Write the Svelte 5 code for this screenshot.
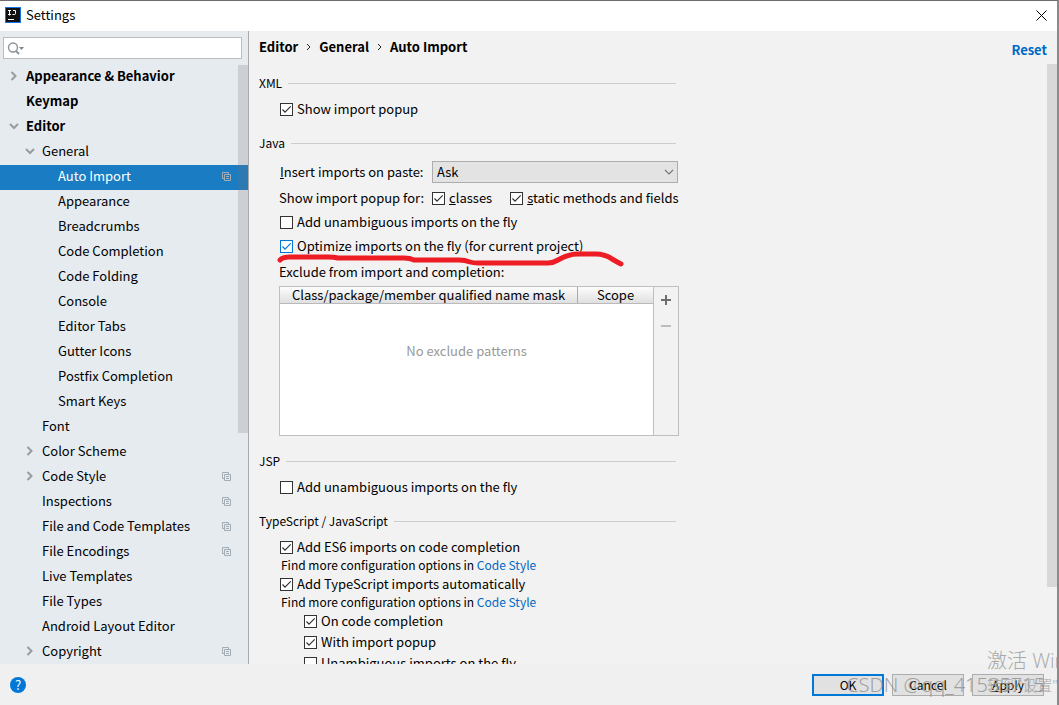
<script lang="ts">
	interface TreeItem {
		label: string;
		level: number;
		arrow?: 'open' | 'closed';
		bold?: boolean;
		project?: boolean;
	}

	const items: TreeItem[] = [
		{ label: 'Appearance & Behavior', level: 0, arrow: 'closed', bold: true },
		{ label: 'Keymap', level: 0, bold: true },
		{ label: 'Editor', level: 0, arrow: 'open', bold: true },
		{ label: 'General', level: 1, arrow: 'open' },
		{ label: 'Auto Import', level: 2, project: true },
		{ label: 'Appearance', level: 2 },
		{ label: 'Breadcrumbs', level: 2 },
		{ label: 'Code Completion', level: 2 },
		{ label: 'Code Folding', level: 2 },
		{ label: 'Console', level: 2 },
		{ label: 'Editor Tabs', level: 2 },
		{ label: 'Gutter Icons', level: 2 },
		{ label: 'Postfix Completion', level: 2 },
		{ label: 'Smart Keys', level: 2 },
		{ label: 'Font', level: 1 },
		{ label: 'Color Scheme', level: 1, arrow: 'closed' },
		{ label: 'Code Style', level: 1, arrow: 'closed', project: true },
		{ label: 'Inspections', level: 1, project: true },
		{ label: 'File and Code Templates', level: 1, project: true },
		{ label: 'File Encodings', level: 1, project: true },
		{ label: 'Live Templates', level: 1 },
		{ label: 'File Types', level: 1 },
		{ label: 'Android Layout Editor', level: 1 },
		{ label: 'Copyright', level: 1, arrow: 'closed', project: true }
	];

	let selected = $state('Auto Import');
	let query = $state('');
	let paste = $state('Ask');
</script>

{#snippet check(label: string, checked: boolean, mnemonic = false, active = false)}
	<label class="check" class:check--active={active}>
		<span class="check__box">
			<input type="checkbox" {checked} />
			<svg viewBox="0 0 13 13"><path d="M2.5 6.5 5 9.2 10.7 3.4" /></svg>
		</span>
		<span>{#if mnemonic}<u>{label[0]}</u>{label.slice(1)}{:else}{label}{/if}</span>
	</label>
{/snippet}

{#snippet heading(text: string)}
	<h2 class="group__title">{text}</h2>
{/snippet}

<div class="window">
	<header class="titlebar">
		<svg class="titlebar__logo" viewBox="0 0 16 16">
			<rect width="16" height="16" fill="#1673e6" />
			<rect x="1" y="1" width="14" height="14" fill="#111" />
			<path d="M3 3.5h3M4.5 3.5v5M3 7.5h3M8 3.5h2.5v3q0 1-1 1H7.5M3 12.5h6" fill="none" stroke="#fff" />
		</svg>
		<h1 class="titlebar__title">Settings</h1>
		<button class="titlebar__close" aria-label="Close">
			<svg viewBox="0 0 11 11"><path d="M.5.5l10 10M10.5.5l-10 10" stroke="#000" /></svg>
		</button>
	</header>

	<div class="content">
		<aside class="sidebar">
			<div class="search">
				<svg class="search__icon" viewBox="0 0 17 13">
					<circle cx="6" cy="5.5" r="4.5" fill="none" stroke="#88939b" stroke-width="1.4" />
					<path d="M9 9l3 3" stroke="#88939b" stroke-width="1.8" />
					<path d="M12 5h5l-2.5 3z" fill="#7b858c" />
				</svg>
				<input type="text" aria-label="Search settings" bind:value={query} />
			</div>
			<nav class="tree">
				{#each items as item (item.label)}
					<button
						class="tree__row tree__row--level{item.level}"
						class:tree__row--bold={item.bold}
						class:tree__row--selected={selected === item.label}
						onclick={() => (selected = item.label)}
					>
						<span class="tree__arrow">
							{#if item.arrow === 'closed'}
								<svg viewBox="0 0 10 10"><path d="M2.5 1 6.5 5 2.5 9" /></svg>
							{:else if item.arrow === 'open'}
								<svg viewBox="0 0 10 10"><path d="M1 3 5 7 9 3" /></svg>
							{/if}
						</span>
						<span class="tree__label">{item.label}</span>
						{#if item.project}
							<svg class="tree__project" viewBox="0 0 9 9">
								<path d="M2.5 6.5h-2v-6h6v2M2.5 2.5h6v6h-6zM4 4.5h3M4 6.5h3" />
							</svg>
						{/if}
					</button>
				{/each}
				<div class="tree__scroll"></div>
			</nav>
		</aside>

		<main class="panel">
			<div class="panel__top">
				<div class="crumbs">
					<span>Editor</span>
					<svg viewBox="0 0 5 8"><path d="M1 1 4 4 1 7" /></svg>
					<span>General</span>
					<svg viewBox="0 0 5 8"><path d="M1 1 4 4 1 7" /></svg>
					<span>Auto Import</span>
				</div>
				<a class="panel__reset" href="#reset">Reset</a>
			</div>

			<div class="panel__body">
				<section class="group">
					{@render heading('XML')}
					<div class="group__body">
						{@render check('Show import popup', true)}
					</div>
				</section>

				<section class="group">
					{@render heading('Java')}
					<div class="group__body group__body--java">
						<div class="paste">
							<label for="paste"><u>I</u>nsert imports on paste:</label>
							<div class="paste__select">
								<select id="paste" bind:value={paste}>
									<option>Ask</option>
									<option>All</option>
									<option>None</option>
								</select>
								<svg viewBox="0 0 10 6"><path d="M1 1 5 5 9 1" /></svg>
							</div>
						</div>
						<div class="popup-for">
							<span class="popup-for__label">Show import popup for:</span>
							{@render check('classes', true, true)}
							{@render check('static methods and fields', true, true)}
						</div>
						{@render check('Add unambiguous imports on the fly', false)}
						<div class="marked">
							{@render check('Optimize imports on the fly (for current project)', true, false, true)}
							<svg class="marked__line" viewBox="0 0 348 18">
								<path d="M4 8Q7 5 13 5H52Q58 5 62 6H128Q134 6 138 8H183Q189 8 194 10Q197 11 202 11H272Q277 11 282 8Q292 2 302 2H320Q329 2 336 7Q341 10 345 12" />
							</svg>
						</div>
						<div class="exclude__label">Exclude from import and completion:</div>
						<div class="exclude">
							<div class="exclude__main">
								<table>
									<thead>
										<tr>
											<th>Class/package/member qualified name mask</th>
											<th>Scope</th>
										</tr>
									</thead>
								</table>
								<p class="exclude__empty">No exclude patterns</p>
							</div>
							<div class="exclude__tools">
								<button aria-label="Add">
									<svg viewBox="0 0 10 10"><path d="M0 5h10M5 0v10" /></svg>
								</button>
								<button aria-label="Remove" disabled>
									<svg viewBox="0 0 10 10"><path d="M0 5h10" /></svg>
								</button>
							</div>
						</div>
					</div>
				</section>

				<section class="group">
					{@render heading('JSP')}
					<div class="group__body">
						{@render check('Add unambiguous imports on the fly', false)}
					</div>
				</section>

				<section class="group">
					{@render heading('TypeScript / JavaScript')}
					<div class="group__body">
						{@render check('Add ES6 imports on code completion', true)}
						<p class="hint">Find more configuration options in <a href="#code-style">Code Style</a></p>
						{@render check('Add TypeScript imports automatically', true)}
						<p class="hint">Find more configuration options in <a href="#code-style">Code Style</a></p>
						<div class="nested">
							{@render check('On code completion', true)}
							{@render check('With import popup', true)}
							{@render check('Unambiguous imports on the fly', false)}
						</div>
					</div>
				</section>
				<div class="panel__scroll"></div>
			</div>
		</main>
	</div>

	<footer class="footer">
		<button class="footer__help" aria-label="Help">?</button>
		<button class="button button--default">OK</button>
		<button class="button">Cancel</button>
		<button class="button"><u>A</u>pply</button>
	</footer>

	<div class="activate">
		<div>激活 Windows</div>
		<div class="activate__sub">转到"设置"以激活</div>
	</div>
	<div class="watermark">CSDN @qq_41535715</div>
</div>

<style>
	:global(body) {
		margin: 0;
	}

	.window {
		position: relative;
		display: flex;
		flex-direction: column;
		box-sizing: border-box;
		height: 100vh;
		overflow: hidden;
		border-top: 1px solid #6d6d6d;
		border-right: 2px solid #8a8a8a;
		background: #f0f0f0;
		color: #000;
		font-family: 'Noto Sans CJK SC', sans-serif;
		font-size: 13px;
		line-height: 18px;
	}

	button,
	input,
	select {
		font: inherit;
		color: inherit;
	}

	button {
		padding: 0;
		border: 0;
		background: none;
	}

	svg {
		display: block;
		flex: none;
	}

	a {
		color: #0068c5;
		text-decoration: none;
	}

	.titlebar {
		display: flex;
		align-items: center;
		flex: none;
		gap: 5px;
		height: 30px;
		box-sizing: border-box;
		padding: 0 10px 2px 5px;
		background: #fff;
	}

	.titlebar__logo {
		width: 16px;
		height: 16px;
	}

	.titlebar__title {
		flex: 1;
		margin: 0;
		font-size: 13px;
		font-weight: 400;
	}

	.titlebar__close svg {
		width: 11px;
		height: 11px;
	}

	.content {
		display: flex;
		flex: 1;
		min-height: 0;
	}

	.sidebar {
		display: flex;
		flex-direction: column;
		flex: none;
		width: 248px;
		border-right: 1px solid #a9a9a9;
		background: #e6ebf0;
	}

	.search {
		display: flex;
		align-items: center;
		height: 20px;
		margin: 6px 6px 6px 3px;
		padding-left: 3px;
		border: 1px solid #b9bdc0;
		background: #fff;
	}

	.search__icon {
		width: 17px;
		height: 13px;
	}

	.search input {
		flex: 1;
		min-width: 0;
		padding: 0 4px;
		border: 0;
		outline: 0;
		background: none;
	}

	.tree {
		position: relative;
		flex: 1;
		min-height: 0;
		overflow: hidden;
	}

	.tree__row {
		display: flex;
		align-items: center;
		width: 100%;
		height: 25px;
		padding: 0 17px 3px 9px;
		text-align: left;
	}

	.tree__row--level1 {
		padding-left: 25px;
	}

	.tree__row--level2 {
		padding-left: 41px;
	}

	.tree__row--bold {
		font-weight: 700;
	}

	.tree__row--selected {
		background: #1a7dc4;
		color: #fff;
	}

	.tree__arrow {
		width: 17px;
	}

	.tree__arrow svg {
		width: 10px;
		height: 10px;
		fill: none;
		stroke: #999b9d;
		stroke-width: 2;
	}

	.tree__label {
		flex: 1;
	}

	.tree__project {
		width: 9px;
		height: 9px;
		fill: none;
		stroke: #a3adb5;
	}

	.tree__scroll {
		position: absolute;
		top: 0;
		right: 0;
		width: 10px;
		height: 368px;
		background: rgb(115 115 115 / 0.22);
	}

	.panel {
		display: flex;
		flex-direction: column;
		flex: 1;
		min-width: 0;
		background: #f2f2f2;
	}

	.panel__top {
		display: flex;
		justify-content: space-between;
		flex: none;
		box-sizing: border-box;
		height: 33px;
		padding: 7px 10px 0;
		font-weight: 700;
	}

	.crumbs {
		display: flex;
		align-items: center;
		gap: 8px;
		height: 18px;
	}

	.crumbs svg {
		width: 5px;
		height: 8px;
		fill: none;
		stroke: #222;
	}

	.panel__reset {
		padding-top: 3px;
	}

	.panel__body {
		position: relative;
		flex: 1;
		min-height: 0;
		overflow: hidden;
		padding: 10px 10px 0;
	}

	.panel__scroll {
		position: absolute;
		top: 0;
		right: 0;
		width: 10px;
		height: 523px;
		background: #d8d8d8;
	}

	.group {
		max-width: 417px;
		margin-bottom: 16px;
	}

	.group__title {
		display: flex;
		align-items: center;
		gap: 6px;
		margin: 0 0 8px;
		font-size: 12px;
		font-weight: 400;
	}

	.group__title::after {
		content: '';
		flex: 1;
		height: 1px;
		background: #cdcdcd;
	}

	.group__body {
		padding-left: 21px;
	}

	.group__body--java {
		margin-right: -2px;
	}

	.check {
		display: flex;
		align-items: center;
		gap: 4px;
		height: 18px;
		white-space: nowrap;
	}

	.check__box {
		display: grid;
		flex: none;
		width: 13px;
		height: 13px;
	}

	.check__box > * {
		grid-area: 1 / 1;
		width: 13px;
		height: 13px;
	}

	.check input {
		appearance: none;
		box-sizing: border-box;
		margin: 0;
		border: 1px solid #333;
		background: #fff;
	}

	.check svg {
		visibility: hidden;
		pointer-events: none;
		fill: none;
		stroke: #333;
		stroke-width: 1.2;
	}

	.check input:checked + svg {
		visibility: visible;
	}

	.check--active input {
		border-color: #0078d7;
	}

	.check--active svg {
		stroke: #0078d7;
	}

	.paste {
		display: flex;
		align-items: center;
		justify-content: space-between;
		height: 22px;
		padding-top: 1px;
	}

	.paste__select {
		display: flex;
		align-items: center;
		width: 246px;
	}

	.paste__select select {
		appearance: none;
		box-sizing: border-box;
		width: 100%;
		height: 22px;
		padding: 0 4px;
		border: 1px solid #adadad;
		border-radius: 0;
		background: #e3e3e3;
	}

	.paste__select svg {
		width: 10px;
		height: 6px;
		margin-left: -14px;
		pointer-events: none;
		fill: none;
		stroke: #777;
		stroke-width: 1.2;
	}

	.popup-for {
		display: flex;
		align-items: center;
		gap: 18px;
		margin: 6px 0 6px -1px;
		white-space: nowrap;
	}

	.popup-for__label {
		margin-right: -10px;
	}

	.marked {
		position: relative;
		margin-top: 6px;
	}

	.marked__line {
		position: absolute;
		top: 15px;
		left: -4px;
		width: 348px;
		height: 18px;
		overflow: visible;
		pointer-events: none;
		fill: none;
		stroke: #ee1c24;
		stroke-width: 5;
		stroke-linecap: round;
	}

	.exclude__label {
		margin: 8px 0 5px -1px;
	}

	.exclude {
		display: flex;
		height: 148px;
		margin: 0 -1px 0 -1px;
		border: 1px solid #bfbfbf;
	}

	.exclude__main {
		flex: 1;
		background: #fff;
	}

	.exclude table {
		width: 100%;
		border-collapse: collapse;
		table-layout: fixed;
		background: linear-gradient(#fdfdfd, #dedede);
	}

	.exclude th {
		height: 16px;
		padding: 0;
		border-bottom: 1px solid #bababa;
		font-weight: 400;
		line-height: 16px;
		white-space: nowrap;
	}

	.exclude th:last-child {
		width: 75px;
		border-left: 1px solid #aaa;
	}

	.exclude__empty {
		margin: 38px 0 0;
		color: #999;
		text-align: center;
	}

	.exclude__tools {
		display: flex;
		flex-direction: column;
		align-items: center;
		gap: 16px;
		width: 24px;
		padding-top: 8px;
		border-left: 1px solid #bfbfbf;
	}

	.exclude__tools svg {
		width: 10px;
		height: 10px;
		stroke: #6e6e6e;
		stroke-width: 2;
	}

	.exclude__tools button:disabled svg {
		stroke: #bdbdbd;
	}

	.hint {
		margin: 0 0 1px 1px;
		font-size: 12px;
	}

	.nested {
		display: flex;
		flex-direction: column;
		gap: 3px;
		padding-left: 24px;
	}

	.footer {
		display: flex;
		align-items: center;
		flex: none;
		gap: 8px;
		height: 41px;
		padding: 0 13px 0 10px;
		background: #f0f0f0;
	}

	.footer__help {
		width: 16px;
		height: 16px;
		margin-right: auto;
		border-radius: 50%;
		background: #0078d7;
		color: #fff;
		line-height: 16px;
	}

	.button {
		width: 72px;
		height: 22px;
		border: 1px solid #adadad;
		background: #e1e1e1;
		font-size: 12px;
	}

	.button--default {
		border: 2px solid #0078d7;
	}

	.activate {
		position: absolute;
		left: 987px;
		bottom: 8px;
		color: #a8a8a8;
		font-family: 'Open Sans', 'Noto Sans CJK SC', sans-serif;
		font-size: 20px;
		font-weight: 300;
		line-height: 24px;
		white-space: nowrap;
		pointer-events: none;
	}

	.activate__sub {
		font-size: 15px;
	}

	.watermark {
		position: absolute;
		right: 12px;
		bottom: 8px;
		color: rgb(130 130 130 / 0.7);
		font-family: 'Noto Sans', sans-serif;
		font-size: 20px;
		font-weight: 300;
		line-height: 24px;
		pointer-events: none;
	}
</style>
